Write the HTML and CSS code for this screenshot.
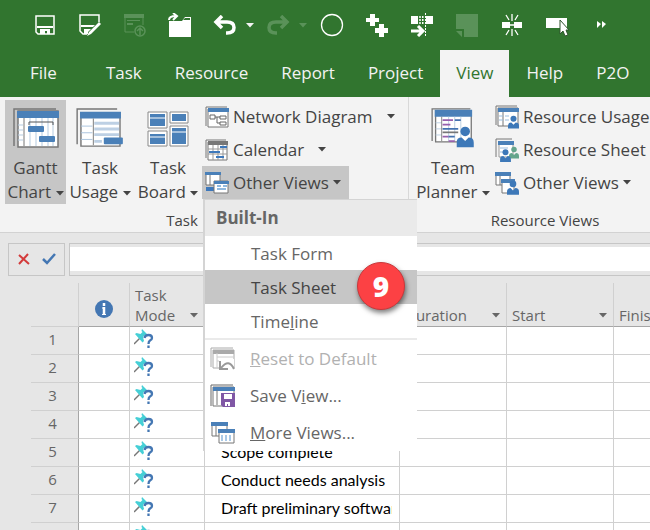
FILE: index.html
```html
<!DOCTYPE html>
<html lang="en">
<head>
    <meta charset="UTF-8">
    <meta name="viewport" content="width=device-width, initial-scale=1.0">
    <title>Project - Gantt Chart</title>
    <link rel="stylesheet" href="styles.css">
</head>
<body>
    <!-- shared shapes -->
    <svg class="defs" width="0" height="0" aria-hidden="true">
        <symbol id="caret" viewBox="0 0 8 5"><path d="M0 0h8L4 4.500z" fill="currentColor"/></symbol>
        <symbol id="person" viewBox="0 0 20 24"><circle cx="10" cy="6" r="5.500"/><path d="M0 24v-5q0-6 6-6l4 4 4-4q6 0 6 6v5z"/></symbol>
        <symbol id="pin" viewBox="0 0 20 20">
            <path d="M0 15l7-7" stroke="#777" stroke-width="1.500"/>
            <path d="M8 0l5 5-1 1.500-1-.5-2 2 1 4-1.500 1.500L1 5l1.500-1 4 1 2-2-1-1z" fill="#45cfd6"/>
            <path d="M10.500 9q.5-3 4-3 3.500 0 3.500 3 0 1.500-2 2.500-1.500 1-1.500 3.500M14.500 16.500v2.500" fill="none" stroke="#4477b3" stroke-width="2.300"/>
        </symbol>
    </svg>

    <header class="title-bar">
        <div class="quick-access">
            <button aria-label="Save"><svg width="20" height="20" viewBox="0 0 20 20"><path d="M1 1h18v18H3l-2-2z" fill="none" stroke="#fff" stroke-width="1.500"/><path d="M2 11h16v2H2zM5 14h10v5h-3v-3h-2v3H5z" fill="#fff"/></svg></button>
            <button aria-label="Save As"><svg width="22" height="23" viewBox="0 0 22 23"><path d="M20 8V1H1v16l3 3h4" fill="none" stroke="#fff" stroke-width="1.500"/><path d="M2 11h14l-2 2H2zM5 15h7l-3 3v2H5zM8 22l2-4 10-10 2 2-10 10z" fill="#fff"/></svg></button>
            <button class="off" aria-label="Publish"><svg width="22" height="23" viewBox="0 0 22 23"><path d="M1 3v15h9M19 3v8" fill="none" stroke="currentColor" stroke-width="1"/><path d="M0 0h20v4H0zM3 6h13v1H3zM3 9h6v2H3z" fill="currentColor"/><circle cx="16" cy="17" r="5" fill="none" stroke="currentColor" stroke-width="1.500"/><path d="M16 21v-7m-3 3l3-3 3 3" fill="none" stroke="currentColor" stroke-width="1.500"/></svg></button>
            <button aria-label="Open"><svg width="24" height="24" viewBox="0 0 24 24"><path d="M1 8h13l3-4h6v20H1z" fill="#fff"/><path d="M15 7l2-2h5v2z" fill="#31752f"/><path d="M1 7q0-4 7-4M5 0l4 3-4 4" fill="none" stroke="#fff" stroke-width="2"/></svg></button>
            <button class="wide" aria-label="Undo"><svg width="24" height="20" viewBox="0 0 24 20"><path d="M3 7h11q7 0 7 5.500T14 18h-1M9 1L3 7l6 6" fill="none" stroke="#fff" stroke-width="3.500"/></svg><svg class="caret"><use href="#caret"/></svg></button>
            <button class="redo off" aria-label="Redo"><svg width="24" height="20" viewBox="0 0 24 20"><path d="M21 7H10q-7 0-7 5.500T10 18h1M15 1l6 6-6 6" fill="none" stroke="currentColor" stroke-width="3.500"/></svg><svg class="caret"><use href="#caret"/></svg></button>
            <button aria-label="Circle"><svg width="24" height="24" viewBox="0 0 24 24"><circle cx="12" cy="12" r="10.500" fill="none" stroke="#fff" stroke-width="1.300"/></svg></button>
            <button aria-label="Link Tasks"><svg width="24" height="24" viewBox="0 0 24 24"><path d="M5 1h5v4h4v4h-4v4H5V9H1V5h4zM14 11h5v4h4v5h-4v4h-5v-4h-4v-5h4z" fill="#fff"/></svg></button>
            <button aria-label="Split Task"><svg width="24" height="24" viewBox="0 0 24 24"><path d="M1 3h7v8H1zM16 3h7v8h-7z" fill="#fff"/><path d="M9 4h5M9 7h5M9 10h5M10 3v8M12.500 3v8M15.500 0v24" stroke="#fff" stroke-dasharray="2 1"/><path d="M1 18h12M8 13l5 5-5 5" fill="none" stroke="#fff" stroke-width="3"/></svg></button>
            <button class="off" aria-label="Task Notes"><svg width="22" height="23" viewBox="0 0 22 23"><path d="M0 0h22v23H8V15H0zM0 17h6v6z" fill="currentColor"/></svg></button>
            <button aria-label="Scroll to Task"><svg width="20" height="22" viewBox="0 0 20 22"><path d="M0 8h8v6H0zM12 8h8v6h-8z" fill="#fff"/><path d="M8 11h4M10 0v7M10 15v7M4 1l3 5M16 1l-3 5M4 21l3-5M16 21l-3-5" stroke="#fff" stroke-width="1.300"/></svg></button>
            <button aria-label="Select Objects"><svg width="24" height="24" viewBox="0 0 24 24"><path d="M1 5h21v10H1z" fill="#fff"/><path d="M15 7v14l3-3 2 5 3-1-2-5h3z" fill="#fff" stroke="#31552f"/></svg></button>
            <button aria-label="Customize"><svg width="10" height="8" viewBox="0 0 10 8"><path d="M0 0l4 3-4 4zM5 0l4 3-4 4z" fill="#fff"/></svg></button>
        </div>
        <nav class="tabs">
            <a href="#" class="file">File</a>
            <a href="#">Task</a>
            <a href="#">Resource</a>
            <a href="#">Report</a>
            <a href="#">Project</a>
            <a href="#" class="active">View</a>
            <a href="#">Help</a>
            <a href="#">P2O</a>
        </nav>
    </header>

    <section class="ribbon">
        <div class="group task-views">
            <div class="tools">
                <button class="big pressed">
                    <svg width="46" height="40" viewBox="0 0 46 40"><path d="M1 38V1h42" fill="none" stroke="#777" stroke-width="1.500"/><path d="M5 3h40v36H5z" fill="#fff" stroke="#777" stroke-width="1.500"/><path d="M4 3h42v7H4z" fill="#4a80b8"/><path d="M5 17h5M5 22h5M5 27h5M5 32h5M17 10v28M23 10v28M29 10v28M35 10v28M40 10v28" stroke="#b5cbe0"/><path d="M11 10v28" stroke="#777"/><path d="M16 17v-3h24v3" fill="none" stroke="#555"/><rect x="15" y="18" width="16" height="6" rx="1" fill="#4a80b8"/><rect x="26" y="28" width="16" height="6" rx="1" fill="#4a80b8"/></svg>
                    <span>Gantt</span><span>Chart <svg class="caret"><use href="#caret"/></svg></span>
                </button>
                <button class="big usage">
                    <svg width="50" height="42" viewBox="0 0 50 42"><path d="M1 38V1h42" fill="none" stroke="#777" stroke-width="1.500"/><path d="M5 5h41v35H5z" fill="#fff" stroke="#777" stroke-width="1.500"/><path d="M4 4h43v7H4z" fill="#4a80b8"/><path d="M5 19h12M5 26h12M5 33h12" stroke="#a9c3dd"/><path d="M19 16h26M19 22h26M19 28h26M19 35h8" stroke="#bdd0e4" stroke-width="3"/><path d="M18 11v28" stroke="#777"/><rect x="29" y="31" width="20" height="7" rx="1" fill="#4a80b8"/></svg>
                    <span>Task</span><span>Usage <svg class="caret"><use href="#caret"/></svg></span>
                </button>
                <button class="big board">
                    <svg width="42" height="38" viewBox="0 0 42 38"><g fill="#fff" stroke="#888"><path d="M1 3h19v16H1zM23 3h18v11H23zM1 22h19v15H1zM23 17h18v20H23z"/></g><path d="M3 5h15v12H3zM25 5h14v7H25zM3 25h15v10H3zM25 19h14v16H25z" fill="#4a80b8"/><path d="M3 9h15M3 28h15M25 23h14" stroke="#fff"/></svg>
                    <span>Task</span><span>Board <svg class="caret"><use href="#caret"/></svg></span>
                </button>
                <div class="small-tools">
                    <button class="small network">
                        <svg width="24" height="22" viewBox="0 0 24 22"><path d="M1 20V1h21" fill="none" stroke="#777"/><path d="M3 3h20v18H3z" fill="#fff" stroke="#777"/><path d="M3 2h21v4H3z" fill="#4a80b8"/><path d="M5 9h5v4H5zM15 10h6v3h-6zM15 16h6v3h-6zM10 11h5M12 11v6h3" fill="none" stroke="#666"/></svg>
                        Network Diagram <svg class="caret"><use href="#caret"/></svg>
                    </button>
                    <button class="small network">
                        <svg width="24" height="22" viewBox="0 0 24 22"><path d="M1 19V1h20" fill="none" stroke="#777"/><path d="M3 3h19v18H3z" fill="#fff" stroke="#777"/><path d="M3 2h20v4H3z" fill="#777"/><path d="M3 10h19M3 15h19M8 6v15M13 6v15M18 6v15" stroke="#999"/><path d="M15 8h7M4 13h11M11 18h8" stroke="#3d78bb" stroke-width="2"/></svg>
                        Calendar <svg class="caret"><use href="#caret"/></svg>
                    </button>
                    <div class="menu-holder">
                        <button class="small pressed" aria-expanded="true">
                            <svg width="24" height="22" viewBox="0 0 24 22"><path d="M1 1h14v12H1z" fill="#fff" stroke="#777"/><path d="M0 0h16v3H0z" fill="#4a80b8"/><path d="M5 3v10" stroke="#777"/><path d="M1 17h11" stroke="#3d78bb" stroke-width="4"/><path d="M9 9h14v12H9z" fill="#fff" stroke="#777"/><path d="M9 9h15v3H9z" fill="#4a80b8"/><path d="M12 14h4M18 14h4M12 17h9" stroke="#91b9df" stroke-width="2"/></svg>
                            Other Views <svg class="caret"><use href="#caret"/></svg>
                        </button>
                        <div class="menu" role="menu">
                            <h2>Built-In</h2>
                            <button role="menuitem">Task Form</button>
                            <button role="menuitem" class="selected">Task Sheet<b class="badge">9</b></button>
                            <button role="menuitem">Time<u>l</u>ine</button>
                            <hr>
                            <button role="menuitem" class="command" disabled>
                                <svg width="26" height="24" viewBox="0 0 26 24"><path d="M1 20V1h22" fill="none" stroke="#aaa"/><path d="M3 3h21v18H3z" fill="#fff" stroke="#aaa"/><path d="M3 3h21v4H3z" fill="#aaa"/><path d="M7 6v15M7 10h17M7 14h17" stroke="#ccc"/><path d="M9 12h15v12H9z" fill="#fff"/><path d="M10 14v8h8M11 21q8-10 13 1" fill="none" stroke="#999" stroke-width="2"/></svg>
                                <span><u>R</u>eset to Default</span>
                            </button>
                            <button role="menuitem" class="command">
                                <svg width="26" height="24" viewBox="0 0 26 24"><path d="M1 22V1h22" fill="none" stroke="#666"/><path d="M3 3h21v19H3z" fill="#fff" stroke="#777"/><path d="M3 3h22v4H3z" fill="#4a80b8"/><path d="M7 6v15" stroke="#777"/><path d="M11 9h14v14H13l-2-2z" fill="#8057a5"/><path d="M14 10h8v5h-8zM15 18h5v4h-2v-2h-1v2h-2z" fill="#fff"/></svg>
                                <span>Save V<u>i</u>ew...</span>
                            </button>
                            <button role="menuitem" class="command">
                                <svg width="26" height="24" viewBox="0 0 26 24"><path d="M2 2h15v13H2z" fill="#fff" stroke="#777"/><path d="M1 1h17v4H1z" fill="#4a80b8"/><path d="M6 5v10" stroke="#777"/><path d="M9 9h15v13H9z" fill="#fff" stroke="#777"/><path d="M8 8h17v4H8z" fill="#4a80b8"/><path d="M12 14v6M16 14v6M20 14v6" stroke="#a9c9e7" stroke-width="2"/></svg>
                                <span><u>M</u>ore Views...</span>
                            </button>
                        </div>
                    </div>
                </div>
            </div>
            <p>Task</p>
        </div>
        <div class="group resource-views">
            <div class="tools">
                <button class="big planner">
                    <svg width="50" height="46" viewBox="0 0 50 46"><path d="M1 38V1h44" fill="none" stroke="#777" stroke-width="1.500"/><path d="M5 3h41v36H5z" fill="#fff" stroke="#777" stroke-width="1.500"/><path d="M4 2h43v8H4z" fill="#4a80b8"/><path d="M5 17h7M5 24h7M5 31h7M20 10v28M27 10v28M34 10v28" stroke="#b5cbe0"/><path d="M12 10v28" stroke="#777"/><path d="M13 14h12M13 19h9M13 33h7M20 38h7" stroke="#9760ad" stroke-width="2"/><path d="M27 14h7M13 24h18M20 33h7" stroke="#4472b0" stroke-width="2"/><path d="M13 28h18" stroke="#777" stroke-width="2"/><use href="#person" x="29" y="20" width="20" height="26" fill="#3d78b8"/></svg>
                    <span>Team</span><span>Planner <svg class="caret"><use href="#caret"/></svg></span>
                </button>
                <div class="small-tools">
                    <button class="small">
                        <svg width="24" height="24" viewBox="0 0 24 24"><path d="M1 20V1h21" fill="none" stroke="#777"/><path d="M3 3h20v18H3z" fill="#fff" stroke="#777"/><path d="M3 3h21v4H3z" fill="#4a80b8"/><path d="M8 7v14" stroke="#777"/><path d="M4 11h4M4 15h4M10 11h4M10 15h4" stroke="#9bbddd"/><use href="#person" x="13" y="10" width="11" height="14" fill="#3d78b8"/></svg>
                        Resource Usage
                    </button>
                    <button class="small">
                        <svg width="24" height="24" viewBox="0 0 24 24"><path d="M1 19V1h16" fill="none" stroke="#777"/><path d="M4 4h14v15H4z" fill="#fff" stroke="#999"/><path d="M3 3h16v4H3z" fill="#4a80b8"/><path d="M5 10h8M5 14h4" stroke="#9bbddd"/><use href="#person" x="14" y="8" width="10" height="13" fill="#65a58c"/><use href="#person" x="5" y="11" width="11" height="13" fill="#3d78b8"/></svg>
                        Resource Sheet
                    </button>
                    <button class="small">
                        <svg width="24" height="24" viewBox="0 0 24 24"><path d="M1 2h14v12H1z" fill="#fff" stroke="#777"/><path d="M0 1h16v4H0z" fill="#4a80b8"/><path d="M5 5v9" stroke="#777"/><path d="M7 9h12v13H7z" fill="#fff" stroke="#777"/><path d="M6 8h14v4H6z" fill="#4a80b8"/><use href="#person" x="12" y="9" width="12" height="15" fill="#3d78b8"/></svg>
                        Other Views <svg class="caret"><use href="#caret"/></svg>
                    </button>
                </div>
            </div>
            <p>Resource Views</p>
        </div>
    </section>

    <main>
        <div class="entry-bar">
            <div class="entry-actions">
                <button aria-label="Cancel"><svg width="12" height="12" viewBox="0 0 12 12"><path d="M1 2l10 9M10 1L1 11" stroke="#d33b3b" stroke-width="2"/></svg></button>
                <button aria-label="Enter"><svg width="14" height="12" viewBox="0 0 14 12"><path d="M1 6l4 4 8-9" fill="none" stroke="#4477b3" stroke-width="2.500"/></svg></button>
            </div>
            <div class="entry-field"><input type="text" aria-label="Entry"></div>
        </div>
        <table class="sheet">
            <colgroup><col class="c-id"><col class="c-info"><col class="c-mode"><col class="c-name"><col class="c-date"><col class="c-date"><col class="c-date"></colgroup>
            <thead>
                <tr>
                    <td></td>
                    <th><svg class="info" width="18" height="18" viewBox="0 0 18 18"><circle cx="9" cy="9" r="9" fill="#4477b3"/><path d="M9 3v3M9 7v8" stroke="#fff" stroke-width="2.500"/><path d="M7 8h3M7 14.500h4" stroke="#fff"/></svg></th>
                    <th><div class="head"><span>Task<br>Mode</span> <svg class="caret"><use href="#caret"/></svg></div></th>
                    <th aria-label="Task Name"></th>
                    <th><div class="head"><span>Duration</span> <svg class="caret"><use href="#caret"/></svg></div></th>
                    <th><div class="head"><span>Start</span> <svg class="caret"><use href="#caret"/></svg></div></th>
                    <th><div class="head"><span>Finish</span> <svg class="caret"><use href="#caret"/></svg></div></th>
                </tr>
            </thead>
            <tbody>
                <tr><th>1</th><td></td><td><svg class="pin"><use href="#pin"/></svg></td><td></td><td></td><td></td><td></td></tr>
                <tr><th>2</th><td></td><td><svg class="pin"><use href="#pin"/></svg></td><td></td><td></td><td></td><td></td></tr>
                <tr><th>3</th><td></td><td><svg class="pin"><use href="#pin"/></svg></td><td></td><td></td><td></td><td></td></tr>
                <tr><th>4</th><td></td><td><svg class="pin"><use href="#pin"/></svg></td><td></td><td></td><td></td><td></td></tr>
                <tr><th>5</th><td></td><td><svg class="pin"><use href="#pin"/></svg></td><td><div class="name">Scope complete</div></td><td></td><td></td><td></td></tr>
                <tr><th>6</th><td></td><td><svg class="pin"><use href="#pin"/></svg></td><td><div class="name">Conduct needs analysis</div></td><td></td><td></td><td></td></tr>
                <tr><th>7</th><td></td><td><svg class="pin"><use href="#pin"/></svg></td><td><div class="name">Draft preliminary software specifications</div></td><td></td><td></td><td></td></tr>
                <tr><th>8</th><td></td><td><svg class="pin"><use href="#pin"/></svg></td><td><div class="name">Develop preliminary budget</div></td><td></td><td></td><td></td></tr>
            </tbody>
        </table>
    </main>
</body>
</html>
```
FILE: styles.css
```css
* {
    box-sizing: border-box;
}

body {
    margin: 0;
    background-color: #e6e6e6;
    color: #444;
    font-family: "Open Sans", "Noto Sans", sans-serif;
    font-size: 17px;
    overflow: hidden;
}

.defs {
    position: absolute;
}

button {
    border: none;
    padding: 0;
    background: none;
    color: inherit;
    font: inherit;
    white-space: nowrap;
}

svg {
    flex: none;
}

.caret {
    width: 8px;
    height: 5px;
}

/* Title bar */
.title-bar {
    background-color: #31752f;
    color: #f3f3f3;
}

.quick-access {
    display: flex;
    height: 50px;
    padding-left: 22px;
}

.quick-access button {
    display: flex;
    flex: none;
    align-items: center;
    justify-content: center;
    gap: 9px;
    width: 45px;
}

.quick-access .wide {
    width: 62px;
}

.quick-access .off {
    color: #5a9259;
}

.tabs {
    display: flex;
    gap: 1px;
    height: 47px;
    padding-left: 14px;
}

.tabs a {
    padding: 0 16px;
    color: inherit;
    line-height: 46px;
    text-decoration: none;
}

.tabs .file {
    margin-right: 16px;
}

.tabs .active {
    background-color: #f3f3f3;
    color: #31752f;
}

/* Ribbon */
.ribbon {
    display: flex;
    overflow-x: clip;
    border-bottom: 1px solid #d2d2d2;
    background-color: #f3f3f3;
}

.group {
    flex: none;
    padding-top: 3px;
}

.task-views {
    width: 409px;
    border-right: 1px solid #d8d8d8;
}

.resource-views {
    width: 272px;
}

.tools {
    display: flex;
    height: 104px;
    padding-left: 5px;
}

.group p {
    margin: 0;
    padding-top: 4px;
    font-size: 15px;
    line-height: 24px;
    text-align: center;
}

.task-views p {
    padding-right: 44px;
}

.big {
    display: flex;
    flex-direction: column;
    align-items: center;
    width: 61px;
    padding-top: 8px;
    line-height: 24px;
}

.big > svg {
    height: 40px;
    margin-bottom: 8px;
    overflow: visible;
}

.big .caret {
    margin-bottom: 2px;
}

.usage {
    width: 68px;
}

.board {
    width: 68px;
}

.planner {
    width: 78px;
}

.pressed {
    background-color: #c6c6c6;
}

.small-tools {
    display: flex;
    flex-direction: column;
}

.small {
    display: flex;
    align-items: center;
    gap: 4px;
    height: 33px;
    padding: 0 8px 0 3px;
}

.network .caret {
    margin-left: 10px;
}

/* Other Views menu */
.menu-holder {
    position: relative;
}

.menu {
    position: absolute;
    z-index: 10;
    top: 100%;
    left: 1px;
    width: 214px;
    border: 1px solid #d4d4d4;
    border-width: 1px 0 0 2px;
    background-color: #fff;
    color: #666;
}

.menu h2 {
    margin: 0;
    padding-left: 11px;
    background-color: #eaeaea;
    font-size: 17px;
    line-height: 36px;
}

.menu button {
    display: flex;
    position: relative;
    align-items: center;
    width: 100%;
    height: 34px;
    padding-left: 46px;
}

.menu .selected {
    background-color: #c6c6c6;
    color: #444;
}

.menu hr {
    margin: 0;
    border: none;
    border-top: 2px solid #eaeaea;
}

.menu .command {
    gap: 14px;
    height: 37px;
    padding-left: 5px;
}

.menu .command:disabled {
    color: #b1b1b1;
}

.badge {
    position: absolute;
    top: -8px;
    right: 12px;
    width: 48px;
    height: 48px;
    border: 1px solid #c9383b;
    border-radius: 50%;
    background-color: #fc4144;
    box-shadow: 1px 3px 5px rgba(0, 0, 0, 0.5);
    color: #fff;
    font-size: 28px;
    font-weight: 800;
    line-height: 46px;
    text-align: center;
}

/* Entry bar */
main {
    overflow: hidden;
}

.entry-bar {
    display: flex;
    gap: 4px;
    padding: 10px 0 7px 8px;
}

.entry-actions {
    display: flex;
    align-items: center;
    justify-content: center;
    gap: 12px;
    width: 57px;
    height: 33px;
    padding-bottom: 2px;
    border: 1px solid #c6c6c6;
}

.entry-actions svg {
    display: block;
}

.entry-field {
    display: flex;
    flex: 1;
    border: 1px solid #c6c6c6;
    border-right: none;
    padding: 3px 0 4px;
}

.entry-field input {
    width: 100%;
    border: none;
    background-color: #fff;
}

/* Task sheet */
.sheet {
    width: 690px;
    margin-left: 31px;
    border-spacing: 0;
    table-layout: fixed;
    color: #666;
    font-size: 15px;
}

.c-id { width: 48px; }
.c-info { width: 51px; }
.c-mode { width: 75px; }
.c-name { width: 195px; }
.c-date { width: 107px; }

.sheet th,
.sheet td {
    height: 28px;
    padding: 0;
    border-right: 1px solid #d0d0d0;
    border-bottom: 1px solid #d0d0d0;
    font-weight: normal;
}

.sheet tbody td {
    padding-bottom: 3px;
    background-color: #fff;
}

.sheet tbody th {
    border-right-color: #a6a6a6;
    padding: 0 4px 4px 0;
}

.sheet thead th,
.sheet thead td {
    height: 44px;
    border-bottom-color: #a6a6a6;
    vertical-align: bottom;
}

.sheet thead td {
    border-bottom-color: #d0d0d0;
}

.info {
    display: block;
    margin: 0 auto 8px;
}

.head {
    display: flex;
    align-items: flex-end;
    justify-content: space-between;
    padding: 0 6px 1px 5px;
    line-height: 20px;
    text-align: left;
}

.head .caret {
    margin-bottom: 7px;
}

.pin {
    display: block;
    width: 20px;
    height: 20px;
    margin-left: 4px;
}

.name {
    overflow: hidden;
    margin-right: 7px;
    padding-left: 16px;
    color: #000;
    font-family: Lato, sans-serif;
    font-size: 16px;
    white-space: nowrap;
}
```
